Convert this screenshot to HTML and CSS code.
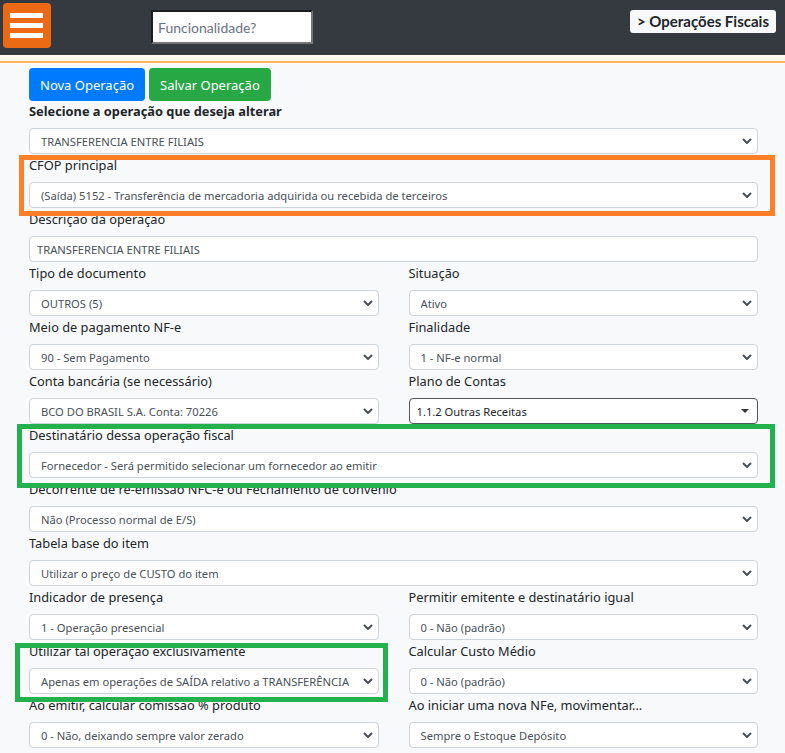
FILE: index.html
```html
<!DOCTYPE html>
<html lang="pt-BR">

<head>
    <meta charset="UTF-8">
    <meta name="viewport" content="width=device-width, initial-scale=1.0">
    <title>Operações Fiscais</title>
    <link rel="stylesheet" href="styles.css">
</head>

<body>
    <div class="page">
        <!-- barra superior -->
        <header class="topbar">
            <button class="menu-btn"><span></span><span></span><span></span></button>
            <input class="search" type="text" placeholder="Funcionalidade?">
            <span class="crumb">&gt; Operações Fiscais</span>
        </header>
        <div class="strip"></div>

        <main class="content">
            <div class="actions">
                <button class="btn btn-blue">Nova Operação</button>
                <button class="btn btn-green">Salvar Operação</button>
            </div>

            <div class="pick-label">Selecione a operação que deseja alterar</div>
            <div class="control">
                <select><option>TRANSFERENCIA ENTRE FILIAIS</option></select>
                <svg class="chev" viewBox="0 0 10 6"><path d="M1 1l4 4 4-4"/></svg>
            </div>

            <div class="field">
                <label>CFOP principal</label>
                <div class="control">
                    <select><option>(Saída) 5152 - Transferência de mercadoria adquirida ou recebida de terceiros</option></select>
                    <svg class="chev" viewBox="0 0 10 6"><path d="M1 1l4 4 4-4"/></svg>
                </div>
            </div>

            <div class="field">
                <label>Descrição da operação</label>
                <input class="text-input" type="text" value="TRANSFERENCIA ENTRE FILIAIS">
            </div>

            <div class="row">
                <div class="field">
                    <label>Tipo de documento</label>
                    <div class="control">
                        <select><option>OUTROS (5)</option></select>
                        <svg class="chev" viewBox="0 0 10 6"><path d="M1 1l4 4 4-4"/></svg>
                    </div>
                </div>
                <div class="field">
                    <label>Situação</label>
                    <div class="control">
                        <select><option>Ativo</option></select>
                        <svg class="chev" viewBox="0 0 10 6"><path d="M1 1l4 4 4-4"/></svg>
                    </div>
                </div>

                <div class="field">
                    <label>Meio de pagamento NF-e</label>
                    <div class="control">
                        <select><option>90 - Sem Pagamento</option></select>
                        <svg class="chev" viewBox="0 0 10 6"><path d="M1 1l4 4 4-4"/></svg>
                    </div>
                </div>
                <div class="field">
                    <label>Finalidade</label>
                    <div class="control">
                        <select><option>1 - NF-e normal</option></select>
                        <svg class="chev" viewBox="0 0 10 6"><path d="M1 1l4 4 4-4"/></svg>
                    </div>
                </div>

                <div class="field">
                    <label>Conta bancária (se necessário)</label>
                    <div class="control">
                        <select><option>BCO DO BRASIL S.A. Conta: 70226</option></select>
                        <svg class="chev" viewBox="0 0 10 6"><path d="M1 1l4 4 4-4"/></svg>
                    </div>
                </div>
                <div class="field">
                    <label>Plano de Contas</label>
                    <button class="picker">
                        <span>1.1.2 Outras Receitas</span>
                        <span class="caret"></span>
                    </button>
                </div>
            </div>

            <div class="field">
                <label>Destinatário dessa operação fiscal</label>
                <div class="control">
                    <select><option>Fornecedor - Será permitido selecionar um fornecedor ao emitir</option></select>
                    <svg class="chev" viewBox="0 0 10 6"><path d="M1 1l4 4 4-4"/></svg>
                </div>
            </div>

            <div class="field">
                <label>Decorrente de re-emissão NFC-e ou Fechamento de convenio</label>
                <div class="control">
                    <select><option>Não (Processo normal de E/S)</option></select>
                    <svg class="chev" viewBox="0 0 10 6"><path d="M1 1l4 4 4-4"/></svg>
                </div>
            </div>

            <div class="field">
                <label>Tabela base do item</label>
                <div class="control">
                    <select><option>Utilizar o preço de CUSTO do item</option></select>
                    <svg class="chev" viewBox="0 0 10 6"><path d="M1 1l4 4 4-4"/></svg>
                </div>
            </div>

            <div class="row">
                <div class="field">
                    <label>Indicador de presença</label>
                    <div class="control">
                        <select><option>1 - Operação presencial</option></select>
                        <svg class="chev" viewBox="0 0 10 6"><path d="M1 1l4 4 4-4"/></svg>
                    </div>
                </div>
                <div class="field">
                    <label>Permitir emitente e destinatário igual</label>
                    <div class="control">
                        <select><option>0 - Não (padrão)</option></select>
                        <svg class="chev" viewBox="0 0 10 6"><path d="M1 1l4 4 4-4"/></svg>
                    </div>
                </div>

                <div class="field">
                    <label>Utilizar tal operação exclusivamente</label>
                    <div class="control">
                        <select><option>Apenas em operações de SAÍDA relativo a TRANSFERÊNCIA</option></select>
                        <svg class="chev" viewBox="0 0 10 6"><path d="M1 1l4 4 4-4"/></svg>
                    </div>
                </div>
                <div class="field">
                    <label>Calcular Custo Médio</label>
                    <div class="control">
                        <select><option>0 - Não (padrão)</option></select>
                        <svg class="chev" viewBox="0 0 10 6"><path d="M1 1l4 4 4-4"/></svg>
                    </div>
                </div>

                <div class="field">
                    <label>Ao emitir, calcular comissão % produto</label>
                    <div class="control">
                        <select><option>0 - Não, deixando sempre valor zerado</option></select>
                        <svg class="chev" viewBox="0 0 10 6"><path d="M1 1l4 4 4-4"/></svg>
                    </div>
                </div>
                <div class="field">
                    <label>Ao iniciar uma nova NFe, movimentar...</label>
                    <div class="control">
                        <select><option>Sempre o Estoque Depósito</option></select>
                        <svg class="chev" viewBox="0 0 10 6"><path d="M1 1l4 4 4-4"/></svg>
                    </div>
                </div>
            </div>
        </main>

        <!-- marcações em cima do formulário -->
        <div class="mark mark-cfop"></div>
        <div class="mark mark-dest"></div>
        <div class="mark mark-excl"></div>
    </div>
</body>

</html>
```

FILE: styles.css
```css
body {
    margin: 0;
    background-color: #f8f9fa;
    color: #212529;
    font-family: "Noto Sans", "Open Sans", sans-serif;
}

.page {
    position: relative;
    height: 753px;
    overflow: hidden;
}

/* topo */
.topbar {
    display: flex;
    align-items: flex-start;
    height: 55px;
    box-sizing: border-box;
    padding: 3px 9px 0 3px;
    background-color: #343a40;
}

.menu-btn {
    display: flex;
    flex-direction: column;
    gap: 5px;
    width: 48px;
    height: 45px;
    padding: 10px 0 0 7px;
    box-sizing: border-box;
    border: 0;
    border-radius: 4px;
    background-color: #ec6a13;
}

.menu-btn span {
    display: block;
    width: 33px;
    height: 5px;
    background-color: #fff;
}

.search {
    width: 162px;
    height: 34px;
    box-sizing: border-box;
    margin: 7px 0 0 100px;
    padding: 0 5px;
    border: 2px solid;
    border-color: #1e1e1e #767676 #767676 #1e1e1e;
    background-color: #fff;
    font-family: Lato, sans-serif;
    font-size: 14px;
}

.search::placeholder {
    color: #6a7383;
}

.crumb {
    margin: 7px 0 0 auto;
    padding: 0 7px;
    border-radius: 3px;
    background-color: #f8f9fa;
    color: #212529;
    font-family: Lato, sans-serif;
    font-weight: bold;
    font-size: 15px;
    line-height: 23px;
}

.strip {
    height: 6px;
    background-color: #fff9f0;
    border-bottom: 2px solid #ffb35c;
}

/* conteúdo */
.content {
    padding: 5px 27px 0 29px;
}

.actions {
    display: flex;
    gap: 4px;
}

.btn {
    height: 33px;
    padding: 0 11px;
    border: 0;
    border-radius: 4px;
    color: #fff;
    font-family: inherit;
    font-size: 13px;
}

.btn-blue {
    background-color: #007bff;
}

.btn-green {
    background-color: #28a745;
}

.pick-label {
    font-weight: bold;
    font-size: 12.8px;
    line-height: 20px;
    margin-bottom: 7px;
}

.field {
    display: flex;
    flex-direction: column;
}

.field label {
    font-size: 12.8px;
    line-height: 20px;
    margin-top: 1px;
    margin-bottom: 7px;
    white-space: nowrap;
}

.row {
    display: grid;
    grid-template-columns: 1fr 1fr;
    column-gap: 30px;
}

.control {
    position: relative;
}

.control select {
    display: block;
    width: 100%;
    height: 26px;
    padding: 0 20px 0 11px;
    appearance: none;
    border: 1px solid #ced4da;
    border-radius: 4px;
    background-color: #fff;
    color: #495057;
    font-family: inherit;
    font-size: 11.2px;
}

.chev {
    position: absolute;
    right: 6px;
    top: 10px;
    width: 10px;
    height: 6px;
    fill: none;
    stroke: #495057;
    stroke-width: 2;
}

.text-input {
    height: 26px;
    box-sizing: border-box;
    padding: 0 7px;
    border: 1px solid #ced4da;
    border-radius: 4px;
    background-color: #fff;
    color: #495057;
    font-family: inherit;
    font-size: 11.2px;
}

.picker {
    display: flex;
    align-items: center;
    justify-content: space-between;
    height: 26px;
    padding: 0 8px 0 7px;
    border: 1px solid #50565c;
    border-radius: 4px;
    background-color: #fff;
    color: #212529;
    font-family: inherit;
    font-size: 11.2px;
}

.caret {
    width: 0;
    height: 0;
    border-top: 4px solid #333;
    border-left: 4px solid transparent;
    border-right: 4px solid transparent;
}

/* marcações */
.mark {
    position: absolute;
    box-sizing: border-box;
    border: 5px solid;
}

.mark-cfop {
    left: 19px;
    top: 155px;
    width: 756px;
    height: 61px;
    border-color: #ff7f27;
}

.mark-dest {
    left: 17px;
    top: 424px;
    width: 758px;
    height: 64px;
    border-color: #22b14c;
}

.mark-excl {
    left: 15px;
    top: 643px;
    width: 373px;
    height: 59px;
    border-color: #22b14c;
}
```
